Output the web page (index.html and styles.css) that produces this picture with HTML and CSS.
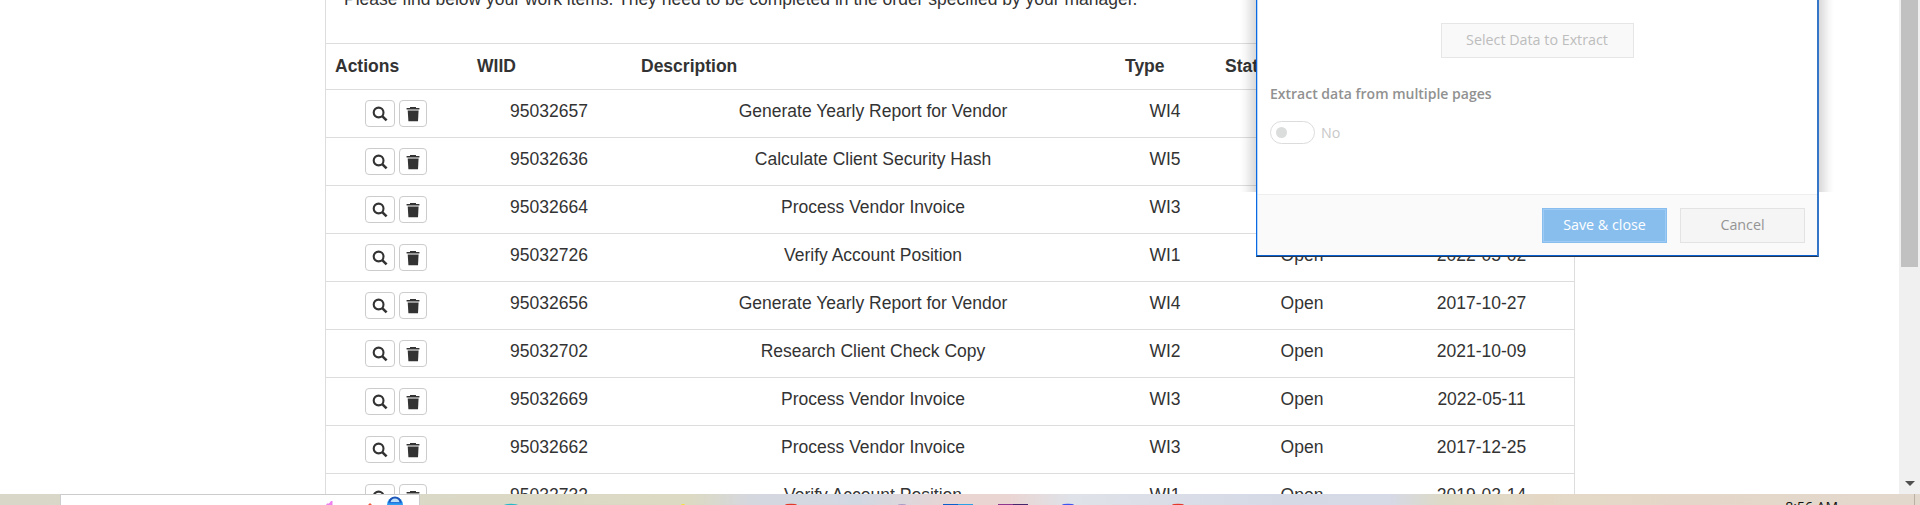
FILE: index.html
```html
<!DOCTYPE html>
<html lang="en">
<head>
<meta charset="utf-8">
<title>Work Items</title>
<link rel="stylesheet" href="styles.css">
</head>
<body>
<svg width="0" height="0" class="defs">
  <symbol id="search" viewBox="0 0 16 16"><circle cx="6.6" cy="6.5" r="4.9" fill="none" stroke="#333" stroke-width="2.1"/><path d="M10.2 10.1L14.6 14.4" stroke="#333" stroke-width="2.6"/></symbol>
  <symbol id="trash" viewBox="0 0 14 16"><path d="M1.7 4.6h10.9l-.6 10.6h-9.6z" fill="#333"/><path d="M.6 3.4h12.8" stroke="#999" stroke-width="1.2"/><path d="M.6 2h3.4V1h6v1h3.4v.9H.6z" fill="#333"/></symbol>
</svg>
<div class="screen">
  <div class="browser">
    <main class="page">
      <section class="panel">
        <p class="intro">Please find below your work items. They need to be completed in the order specified by your manager.</p>
        <table class="items">
          <colgroup><col class="c-actions"><col class="c-wiid"><col class="c-desc"><col class="c-type"><col class="c-status"><col class="c-date"></colgroup>
          <thead><tr><th>Actions</th><th>WIID</th><th>Description</th><th>Type</th><th>Status</th><th>Date</th></tr></thead>
          <tbody id="rows"></tbody>
        </table>
      </section>
    </main>
    <div class="scrollbar"><div class="thumb"></div><div class="arrow"></div></div>
  </div>
  <footer class="taskbar">
    <div class="search-box"></div>
    <div class="clock">8:56 AM</div>
    <svg class="marks" width="1920" height="11">
      <path d="M326 11l1-1.500h2l2-2.500h1.500v4z" fill="#ee82ee"/><path d="M368 11l2-2 2 2z" fill="#f25a3c"/>
      <path d="M387 11a8 8 0 0 1 16 0z" fill="#2f9df4"/><path d="M389.500 8.500a5.500 5 0 0 1 11 0" fill="#bfe0fb" stroke="#1c55b8" stroke-width="2"/><path d="M388 8.700h14" stroke="#1c6fd8" stroke-width="1.200"/>
      <ellipse cx="511" cy="11" rx="7" ry="1.2" fill="#26b8c9"/>
      <ellipse cx="683" cy="11" rx="2" ry="1" fill="#f4e23c"/>
      <ellipse cx="791" cy="11" rx="6" ry="1.3" fill="#e23a2a"/>
      <ellipse cx="902" cy="11" rx="4" ry="1" fill="#a99bc6"/>
      <path d="M943 10h15v1h-15z" fill="#0b5fcb"/><path d="M958 10h15v1h-15z" fill="#2aa0e6"/>
      <path d="M998 10h15v1h-15z" fill="#8f3691"/><path d="M1013 10h15v1h-15z" fill="#46266c"/>
      <ellipse cx="1068" cy="11" rx="6" ry="1.3" fill="#3f55f0"/>
      <ellipse cx="1178" cy="11" rx="6" ry="1.3" fill="#e23a2a"/>
      <path d="M1914 0h1v11h-1z" fill="#b9b0a6"/>
    </svg>
  </footer>
  <div class="shade"></div>
  <div class="dialog">
    <div class="body">
      <button class="btn select">Select Data to Extract</button>
      <div class="label">Extract data from multiple pages</div>
      <div class="toggle-row"><span class="toggle"></span><span class="no">No</span></div>
    </div>
    <div class="foot">
      <button class="btn primary">Save &amp; close</button>
      <button class="btn cancel">Cancel</button>
    </div>
  </div>
</div>
<script src="script.js"></script>
</body>
</html>
```
FILE: styles.css
```css
* { box-sizing: border-box; }
html, body { height: 505px; overflow: hidden; }
body { margin: 0; background: #fff; color: #333; font: 17.5px/25px "Liberation Sans", Arial, sans-serif; }
.defs { position: absolute; }
.screen { position: relative; width: 1920px; height: 505px; display: flex; flex-direction: column; overflow: hidden; }
.browser { height: 494px; display: flex; overflow: hidden; }
.page { flex: 1; padding-left: 325px; }
.panel { width: 1250px; border: solid #ddd; border-width: 0 1px; height: 494px; overflow: hidden; }
.intro { margin: -13px 0 31px; padding-left: 18px; height: 25px; white-space: nowrap; }
.items { width: 1248px; table-layout: fixed; border-collapse: separate; border-spacing: 0; border-bottom: 1px solid #ddd; }
.c-actions { width: 141px; } .c-wiid { width: 164px; } .c-desc { width: 484px; }
.c-type { width: 100px; } .c-status { width: 174px; } .c-date { width: 185px; }
th, td { padding: 10px 10px 0; border-top: 1px solid #ddd; vertical-align: top; }
th { height: 46px; text-align: left; }
th:first-child { padding-left: 9px; }
td { height: 48px; padding-top: 9px; text-align: center; white-space: nowrap; }
td:first-child { padding: 10px 12px 0 10px; }
.actions { display: flex; justify-content: center; gap: 4px; }
.icon { height: 27px; width: 30px; border: 1px solid #ccc; border-radius: 4px; background: #fff; display: flex; align-items: center; justify-content: center; }
.icon.del { width: 28px; }
.icon svg { display: block; }
.scrollbar { width: 21px; background: #f0f0f0; padding: 0 2px; display: flex; flex-direction: column; justify-content: space-between; align-items: center; }
.thumb { width: 17px; height: 267px; background: #c1c1c1; }
.arrow { border: solid transparent; border-width: 5px 5px 0; border-top-color: #505050; margin-bottom: 8px; }
.taskbar { position: relative; height: 11px; display: flex; justify-content: space-between; padding: 0 82px 0 60px; overflow: hidden; background: linear-gradient(90deg, #d9d7c8 0, #dbd9c6 500px, #dcdac2 690px, #d5d7df 750px, #d2d8e2 860px, #ead5d3 960px, #ead5d3 1010px, #dfe2e8 1070px, #d5d9e6 1280px, #d6d9e6 1390px, #dddac8 1440px, #e4d8c5 1540px, #e4d7ca 1700px, #e3d8cc 1920px); }
.search-box { width: 360px; background: #fff; border: solid #ccc; border-width: 1px 1px 0; }
.clock { font: 14px/20px "Open Sans", sans-serif; color: #111; padding-top: 3px; white-space: nowrap; }
.marks { position: absolute; inset: 0; }
.shade { position: absolute; left: 1240px; top: 0; width: 594px; height: 192px; background: linear-gradient(90deg, transparent 0, #00000008 5px, #00000026 16px, #00000026 579px, #00000008 589px, transparent 594px); }
.dialog { position: absolute; left: 1256px; top: 0; width: 563px; height: 257px; background: #fff; border: solid #0a68e0; border-width: 0 2px 1px 1px; border-right-color: #3576c8; border-bottom-color: #26384f; box-shadow: inset 0 -1px #0a62d0, inset 1px 0 #b5d7fa; font: 14.3px/20px "Open Sans", sans-serif; display: flex; flex-direction: column; }
.body { height: 194px; padding: 23px 13px 0; display: flex; flex-direction: column; }
.btn { font: inherit; height: 35px; padding: 0 0 1px; border: 1px solid #e6e6e6; background: #f9f9f9; color: #bdbdbd; white-space: nowrap; }
.select { width: 193px; align-self: center; }
.label { font-weight: 600; color: #919191; margin-top: 26px; font-size: 14px; white-space: nowrap; }
.toggle-row { display: flex; align-items: center; gap: 6px; margin-top: 17px; color: #c8c8c8; }
.toggle { width: 45px; height: 23px; border: 1px solid #dcdcdc; border-radius: 12px; padding: 5px; }
.toggle::before { content: ""; display: block; width: 11px; height: 11px; border-radius: 50%; background: #dbdddc; }
.foot { margin: 0 0 1px 1px; flex: 1; background: #fafafa; border-top: 1px solid #eee; padding: 13px 12px 0; display: flex; justify-content: flex-end; gap: 13px; }
.primary, .cancel { width: 125px; }
.primary { background: #88beee; color: #fff; border-color: #88beee; box-shadow: inset 0 0 0 1px #9dcbf5; }
.cancel { background: #f5f5f5; color: #949494; border-color: #e3e3e3; }
```
FILE: script.js
```javascript
const items = [
  ["95032657", "Generate Yearly Report for Vendor", "WI4", "Open", "2021-03-18"],
  ["95032636", "Calculate Client Security Hash", "WI5", "Open", "2019-07-22"],
  ["95032664", "Process Vendor Invoice", "WI3", "Open", "2020-11-05"],
  ["95032726", "Verify Account Position", "WI1", "Open", "2022-05-02"],
  ["95032656", "Generate Yearly Report for Vendor", "WI4", "Open", "2017-10-27"],
  ["95032702", "Research Client Check Copy", "WI2", "Open", "2021-10-09"],
  ["95032669", "Process Vendor Invoice", "WI3", "Open", "2022-05-11"],
  ["95032662", "Process Vendor Invoice", "WI3", "Open", "2017-12-25"],
  ["95032732", "Verify Account Position", "WI1", "Open", "2019-02-14"]
];
document.getElementById("rows").innerHTML = items.map(r =>
  `<tr><td><div class="actions"><span class="icon"><svg width="16" height="16"><use href="#search"/></svg></span><span class="icon del"><svg width="14" height="16"><use href="#trash"/></svg></span></div></td>${r.map(c => `<td>${c}</td>`).join("")}</tr>`
).join("");
```
